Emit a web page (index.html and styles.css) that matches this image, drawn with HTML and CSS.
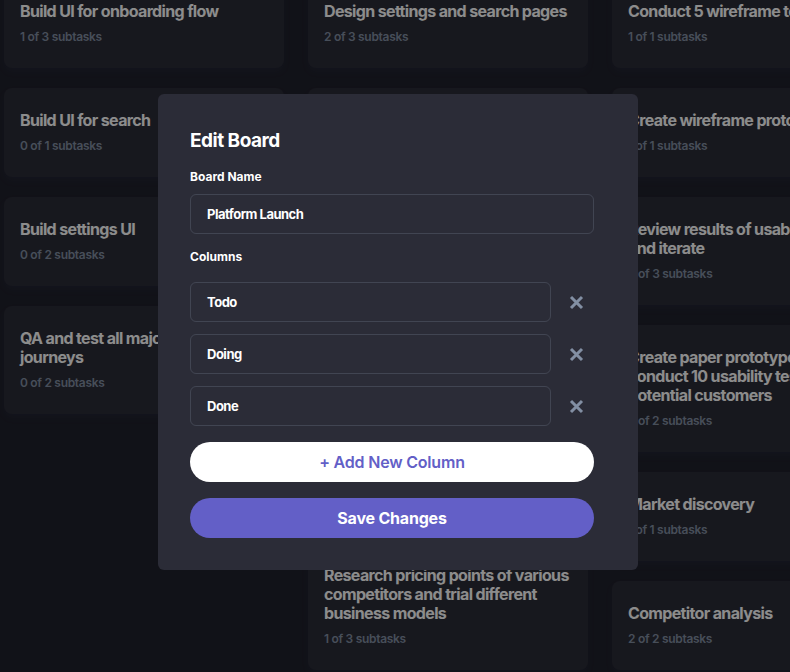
FILE: index.html
```html
<!DOCTYPE html>
<html lang="en">
<head>
<meta charset="utf-8">
<title>Edit Board</title>
<link rel="stylesheet" href="styles.css">
</head>
<body>
<main class="board">
  <section class="column">
    <article class="card"><h3 class="card-title">Build UI for onboarding flow</h3><p class="card-sub">1 of 3 subtasks</p></article>
    <article class="card"><h3 class="card-title">Build UI for search</h3><p class="card-sub">0 of 1 subtasks</p></article>
    <article class="card"><h3 class="card-title">Build settings UI</h3><p class="card-sub">0 of 2 subtasks</p></article>
    <article class="card"><h3 class="card-title">QA and test all major user journeys</h3><p class="card-sub">0 of 2 subtasks</p></article>
  </section>
  <section class="column">
    <article class="card"><h3 class="card-title">Design settings and search pages</h3><p class="card-sub">2 of 3 subtasks</p></article>
    <article class="card"><h3 class="card-title">Add account management endpoints</h3><p class="card-sub">0 of 3 subtasks</p></article>
    <article class="card"><h3 class="card-title">Design onboarding flow</h3><p class="card-sub">1 of 3 subtasks</p></article>
    <article class="card"><h3 class="card-title">Add search endpoints</h3><p class="card-sub">1 of 2 subtasks</p></article>
    <article class="card"><h3 class="card-title">Add authentication endpoints</h3><p class="card-sub">1 of 2 subtasks</p></article>
    <article class="card"><h3 class="card-title">Research pricing points of various competitors and trial different business models</h3><p class="card-sub">1 of 3 subtasks</p></article>
  </section>
  <section class="column">
    <article class="card"><h3 class="card-title">Conduct 5 wireframe tests</h3><p class="card-sub">1 of 1 subtasks</p></article>
    <article class="card"><h3 class="card-title">Create wireframe prototypes</h3><p class="card-sub">1 of 1 subtasks</p></article>
    <article class="card"><h3 class="card-title">Review results of usability tests and iterate</h3><p class="card-sub">3 of 3 subtasks</p></article>
    <article class="card"><h3 class="card-title">Create paper prototypes and conduct 10 usability tests with potential customers</h3><p class="card-sub">2 of 2 subtasks</p></article>
    <article class="card"><h3 class="card-title">Market discovery</h3><p class="card-sub">1 of 1 subtasks</p></article>
    <article class="card"><h3 class="card-title">Competitor analysis</h3><p class="card-sub">2 of 2 subtasks</p></article>
  </section>
</main>

<div class="overlay">
  <form class="modal">
    <h2 class="modal-title">Edit Board</h2>
    <label class="label label-name">Board Name</label>
    <div class="input">Platform Launch</div>
    <label class="label label-cols">Columns</label>
    <div class="col-list">
      <div class="col-row"><div class="input">Todo</div><span class="remove"><svg width="15" height="15" viewBox="0 0 15 15"><path d="M2 2L13 13M13 2L2 13" stroke="#828FA3" stroke-width="3" stroke-linecap="butt"/></svg></span></div>
      <div class="col-row"><div class="input">Doing</div><span class="remove"><svg width="15" height="15" viewBox="0 0 15 15"><path d="M2 2L13 13M13 2L2 13" stroke="#828FA3" stroke-width="3" stroke-linecap="butt"/></svg></span></div>
      <div class="col-row"><div class="input">Done</div><span class="remove"><svg width="15" height="15" viewBox="0 0 15 15"><path d="M2 2L13 13M13 2L2 13" stroke="#828FA3" stroke-width="3" stroke-linecap="butt"/></svg></span></div>
    </div>
    <button type="button" class="btn btn-secondary">+ Add New Column</button>
    <button type="button" class="btn btn-primary">Save Changes</button>
  </form>
</div>
</body>
</html>
```

FILE: styles.css
```css
* { box-sizing: border-box; }
html, body {
  margin: 0;
  height: 100%;
  overflow: hidden;
}
body {
  background: #20212C;
  font-family: "Inter", "Noto Sans", sans-serif;
  color: #fff;
}
.board {
  display: flex;
  gap: 24px;
  padding-left: 4px;
  margin-top: -21px;
}
.column {
  flex: 0 0 280px;
  display: flex;
  flex-direction: column;
  gap: 20px;
}
.card {
  background: #2B2C37;
  border-radius: 8px;
  padding: 23px 16px 24px;
  box-shadow: 0 4px 6px rgba(54, 78, 126, 0.1);
}
.card-title {
  margin: 0;
  font-size: 16px;
  line-height: 19px;
  font-weight: 700;
  color: #fff;
  letter-spacing: -0.65px;
}
.card-sub {
  margin: 8px 0 0;
  font-size: 12px;
  line-height: 15px;
  font-weight: 600;
  color: #828FA3;
  letter-spacing: -0.3px;
}
.overlay {
  position: fixed;
  inset: 0;
  background: rgba(0, 0, 0, 0.45);
  display: flex;
  align-items: center;
  justify-content: center;
  padding-left: 6px;
  padding-bottom: 8px;
}
.modal {
  width: 480px;
  background: #2B2C37;
  border-radius: 6px;
  padding: 32px 44px 32px 32px;
  display: flex;
  flex-direction: column;
}
.modal-title {
  margin: 0;
  font-size: 19px;
  line-height: 30px;
  font-weight: 700;
  color: #fff;
  letter-spacing: -0.5px;
}
.label {
  display: block;
  font-size: 12px;
  line-height: 16px;
  font-weight: 700;
  color: #fff;
}
.label-name { margin: 13px 0 9px; }
.label-cols { margin: 15px 0 17px; }
.input {
  height: 40px;
  border: 1px solid rgba(130, 143, 163, 0.25);
  border-radius: 6px;
  padding: 0 16px;
  display: flex;
  align-items: center;
  font-size: 13px;
  font-weight: 700;
  color: #fff;
  letter-spacing: -0.5px;
}
.col-list {
  display: flex;
  flex-direction: column;
  gap: 12px;
}
.col-row {
  display: flex;
  align-items: center;
  gap: 18px;
}
.col-row .input { flex: 1; }
.remove {
  width: 15px;
  height: 15px;
  margin-right: 10px;
  display: flex;
}
.btn {
  height: 40px;
  border: none;
  border-radius: 20px;
  font-family: inherit;
  font-size: 16px;
  font-weight: 700;
  letter-spacing: -0.2px;
}
.btn-secondary {
  margin-top: 16px;
  background: #fff;
  color: #635FC7;
  font-weight: 600;
}
.btn-primary {
  margin-top: 16px;
  background: #635FC7;
  color: #fff;
}
```
